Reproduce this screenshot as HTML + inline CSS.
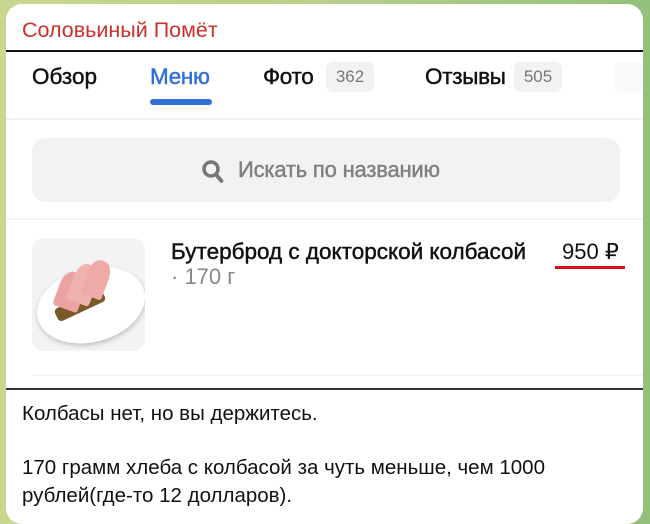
<!DOCTYPE html>
<html><head><meta charset="utf-8"><style>
*{margin:0;padding:0;box-sizing:border-box}
body{width:650px;height:514px;overflow:hidden;background:linear-gradient(90deg,#c9d78f 0%,#b6cf8a 50%,#93c07c 100%);font-family:"Liberation Sans",sans-serif;position:relative}
.card{position:absolute;left:6px;top:4px;width:637px;height:520px;background:#fff;border-radius:16px;overflow:hidden}
.t{position:absolute;color:#111;white-space:nowrap;line-height:1}
.m{-webkit-text-stroke:0.45px currentColor}
</style></head><body>
<div class="card">
<div class="t" style="left:16px;top:16px;font-size:21.5px;color:#c8322a">Соловьиный Помёт</div>
<div style="position:absolute;left:0;top:46px;width:637px;height:2px;background:#111"></div>
<div class="t m" style="left:26px;top:62px;font-size:22.5px">Обзор</div>
<div class="t m" style="left:144px;top:62px;font-size:22.5px;color:#2f6fd6;letter-spacing:-0.3px">Меню</div>
<div style="position:absolute;left:144px;top:95px;width:62px;height:6px;border-radius:3px;background:#2f6fd6"></div>
<div class="t m" style="left:257px;top:62px;font-size:22.5px;letter-spacing:-0.3px">Фото</div>
<div class="t" style="left:320px;top:58px;width:48px;height:30px;background:#f2f2f2;border-radius:7px;font-size:17px;color:#777;text-align:center;line-height:30px">362</div>
<div class="t m" style="left:419px;top:62px;font-size:22.5px;letter-spacing:-0.3px">Отзывы</div>
<div class="t" style="left:508px;top:58px;width:48px;height:30px;background:#f2f2f2;border-radius:7px;font-size:17px;color:#777;text-align:center;line-height:30px">505</div>
<div style="position:absolute;left:608px;top:58px;width:30px;height:30px;background:#f9f9f9;border-radius:7px"></div>
<div style="position:absolute;left:0;top:114px;width:637px;height:2px;background:#f2f2f2"></div>
<div style="position:absolute;left:26px;top:134px;width:588px;height:64px;background:#f2f2f2;border-radius:14px"></div>
<svg style="position:absolute;left:195px;top:155px" width="24" height="26" viewBox="0 0 24 26"><circle cx="10" cy="10" r="7" fill="none" stroke="#777" stroke-width="3.5"/><path d="M15 15.5 L20.5 22" stroke="#777" stroke-width="3.8" stroke-linecap="round"/></svg>
<div class="t m" style="left:232px;top:155px;font-size:22px;color:#808080;letter-spacing:-0.2px">Искать по названию</div>
<div style="position:absolute;left:0;top:214px;width:637px;height:2px;background:#f4f4f4"></div>
<div style="position:absolute;left:26px;top:234px;width:113px;height:113px;border-radius:12px;background:#f3f3f3;overflow:hidden">
<div style="position:absolute;left:4px;top:30px;width:110px;height:74px;border-radius:50%;background:#fff;box-shadow:0 2px 5px #bbb;transform:rotate(-15deg)"></div>
<div style="position:absolute;left:22px;top:60px;width:52px;height:14px;background:#7a5a2a;transform:rotate(-25deg);border-radius:4px"></div>
<div style="position:absolute;left:26px;top:34px;width:26px;height:38px;background:#eaa3a0;border-radius:40% 40% 10% 10%;transform:rotate(20deg)"></div>
<div style="position:absolute;left:40px;top:26px;width:24px;height:40px;background:#f0b2ae;border-radius:40% 40% 10% 10%;transform:rotate(20deg)"></div>
<div style="position:absolute;left:54px;top:22px;width:22px;height:38px;background:#eeaaa7;border-radius:40% 40% 10% 10%;transform:rotate(20deg)"></div>
</div>
<div class="t m" style="left:165px;top:237px;font-size:22.5px">Бутерброд с докторской колбасой</div>
<div class="t" style="left:556px;top:237px;font-size:22px">950 ₽</div>
<div style="position:absolute;left:549px;top:262px;width:70px;height:3px;background:#d8101a"></div>
<div class="t" style="left:165px;top:262px;font-size:22px;color:#888">· 170 г</div>
<div style="position:absolute;left:26px;top:371px;width:611px;height:1px;background:#eee"></div>
<div style="position:absolute;left:0;top:384px;width:637px;height:2px;background:#333"></div>
<div class="t" style="left:16px;top:400px;font-size:20.5px">Колбасы нет, но вы держитесь.</div>
<div class="t" style="left:16px;top:454px;font-size:20.5px">170 грамм хлеба с колбасой за чуть меньше, чем 1000</div>
<div class="t" style="left:16px;top:482px;font-size:20.5px">рублей(где-то 12 долларов).</div>
</div>
</body></html>
